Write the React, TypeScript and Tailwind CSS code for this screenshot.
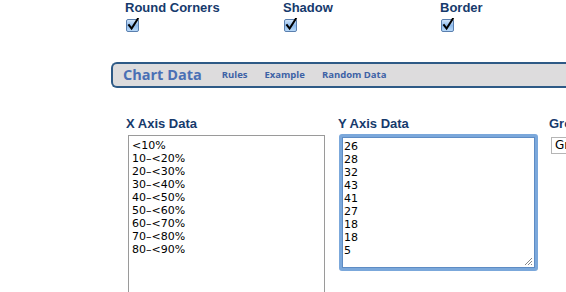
import React from 'react';

const xData = ['<10%', '10–<20%', '20–<30%', '30–<40%', '40–<50%', '50–<60%', '60–<70%', '70–<80%', '80–<90%'];
const yData = ['26', '28', '32', '43', '41', '27', '18', '18', '5'];

const CheckBox: React.FC = () => (
    <svg width="14" height="14" viewBox="0 0 14 14">
        <defs>
            <linearGradient id="cbg" x1="0" y1="0" x2="0" y2="1">
                <stop offset="0" stopColor="#d6e8fb" />
                <stop offset="0.5" stopColor="#8fbbec" />
                <stop offset="1" stopColor="#bcdcfa" />
            </linearGradient>
        </defs>
        <rect x="0.5" y="1.5" width="12" height="12" rx="1.5" fill="url(#cbg)" stroke="#5a7fae" />
        <path d="M3 7.2 L5.6 10.6 L11.8 0.8" fill="none" stroke="#000" strokeWidth="2" strokeLinecap="square" />
    </svg>
);

const App: React.FC = () => {
    const options = ['Round Corners', 'Shadow', 'Border'];

    return (
        <div className="w-[566px] h-[292px] overflow-hidden bg-white font-['Liberation_Sans',Arial,sans-serif]">
            {/* option checkboxes */}
            <div className="flex pl-[125px] pt-[1px]">
                {options.map((label, i) => (
                    <div key={label} className={i === 0 ? 'w-[158px] shrink-0' : 'w-[157px] shrink-0'}>
                        <div className="text-[13px] leading-[13px] font-bold text-[#163a6c]">{label}</div>
                        <div className="mt-[4px] ml-[1px]">
                            <CheckBox />
                        </div>
                    </div>
                ))}
            </div>

            {/* chart data bar */}
            <div className="mt-[30px] ml-[111px] h-[26px] w-[480px] flex items-center bg-[#dddcdd] border-2 border-r-0 border-[#2e5a86] rounded-l-[6px] font-['Open_Sans',sans-serif]">
                <span className="ml-[10px] text-[14.5px] font-bold text-[#4a70b5]">Chart Data</span>
                <span className="ml-[20px] text-[9.5px] font-bold text-[#3d62a6]">Rules</span>
                <span className="ml-[17px] text-[9.5px] font-bold text-[#3d62a6]">Example</span>
                <span className="ml-[17px] text-[9.5px] font-bold text-[#3d62a6]">Random Data</span>
            </div>

            {/* axis data */}
            <div className="flex mt-[29px] ml-[126px]">
                <div className="w-[212px] shrink-0">
                    <div className="text-[13px] leading-[13px] font-bold text-[#163a6c]">X Axis Data</div>
                    <div className="mt-[5px] ml-[2px] w-[197px] h-[170px] border border-[#9a9a9a] bg-white px-[3px] py-[3px] font-['DejaVu_Sans',Verdana,sans-serif] text-[11px] leading-[13px] text-black whitespace-pre">
                        {xData.join('\n')}
                    </div>
                </div>
                <div className="w-[212px] shrink-0">
                    <div className="text-[13px] leading-[13px] font-bold text-[#163a6c]">Y Axis Data</div>
                    <div className="relative mt-[4px] ml-[1px] w-[199px] h-[137px] border-[3px] border-[#7ba8db] rounded-[3px] bg-white">
                        <div className="w-full h-full border border-[#5e8cc4] pl-[1px] pt-[2px] font-['DejaVu_Sans',Verdana,sans-serif] text-[11px] leading-[13px] text-black whitespace-pre">
                            {yData.join('\n')}
                        </div>
                        <svg className="absolute right-[2px] bottom-[2px]" width="9" height="9" viewBox="0 0 9 9">
                            <path d="M8 1 L1 8 M8 4 L4 8 M8 7 L7 8" stroke="#888" strokeWidth="1" />
                        </svg>
                    </div>
                </div>
                <div className="shrink-0">
                    <div className="ml-[-1px] text-[13px] leading-[13px] font-bold text-[#163a6c] whitespace-nowrap">Group</div>
                    <div className="mt-[7px] ml-[1px] w-[60px] h-[17px] border border-[#b5b5b5] bg-white pl-[3px] font-['DejaVu_Sans',Verdana,sans-serif] text-[12px] leading-[15px] text-black whitespace-nowrap">
                        Group
                    </div>
                </div>
            </div>
        </div>
    );
};

export default App;
